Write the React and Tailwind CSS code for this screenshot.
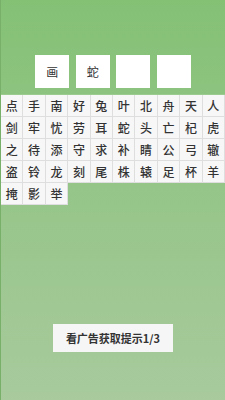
import React from 'react';

const answer = ['画', '蛇', '', ''];
const chars = '点手南好兔叶北舟天人剑牢忧劳耳蛇头亡杞虎之待添守求补睛公弓辙盗铃龙刻尾株辕足杯羊掩影举'.split('');

export default function App() {
  return (
    <div className="w-[225px] h-[400px] flex flex-col bg-gradient-to-b from-[#84c175] to-[#a8ca9d] border-l border-[#78b06a]" style={{ fontFamily: '"Noto Sans CJK SC", "Noto Sans", sans-serif' }}>
      <div className="flex justify-center gap-[6.5px] mt-[55px]">
        {answer.map((c, i) => (
          <div key={i} className="w-[34px] h-[33px] bg-white flex items-center justify-center text-[12px] text-[#333]">
            {c}
          </div>
        ))}
      </div>

      <div className="grid grid-cols-10 mt-[6px] border-t border-[#9ccb8f]">
        {chars.map((c, i) => (
          <div key={i} className="h-[22px] flex items-center justify-center bg-[#f7f7f7] border-r border-b border-[#dedede] text-[12px] font-medium text-[#333]">
            {c}
          </div>
        ))}
      </div>

      <div className="flex-1" />

      <div className="flex justify-center mb-[48px]">
        <button className="w-[120px] h-[28px] bg-[#f6f6f6] text-[11px] font-semibold text-[#333] flex items-center justify-center">
          看广告获取提示1/3
        </button>
      </div>
    </div>
  );
}
